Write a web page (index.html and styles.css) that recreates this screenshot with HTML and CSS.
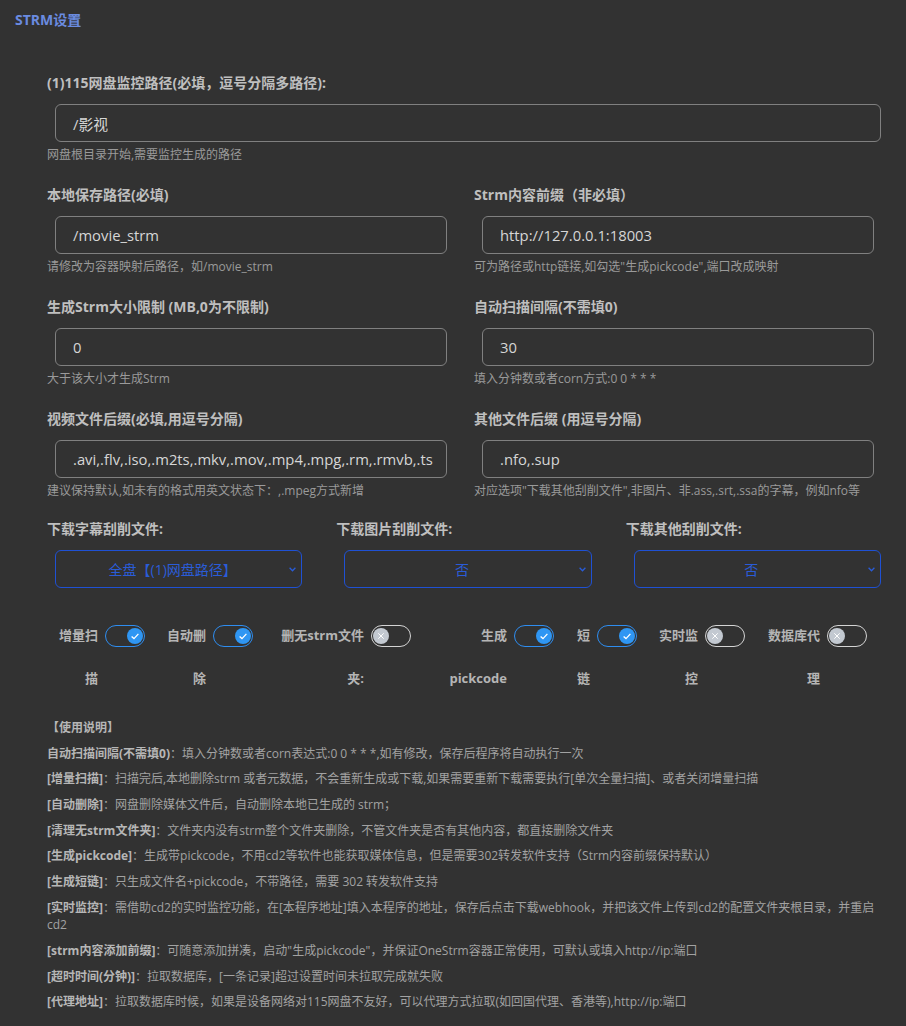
FILE: index.html
```html
<!DOCTYPE html>
<html lang="zh-CN">
<head>
<meta charset="utf-8">
<title>STRM设置</title>
<link rel="stylesheet" href="styles.css">
</head>
<body>
<div class="page">
  <div class="title">STRM设置</div>

  <div class="form">
    <div class="item full first">
      <div class="label">(1)115网盘监控路径(必填，逗号分隔多路径):</div>
      <div class="input">/影视</div>
      <div class="help">网盘根目录开始,需要监控生成的路径</div>
    </div>

    <div class="grid2">
      <div class="item">
        <div class="label">本地保存路径(必填)</div>
        <div class="input">/movie_strm</div>
        <div class="help">请修改为容器映射后路径，如/movie_strm</div>
      </div>
      <div class="item">
        <div class="label">Strm内容前缀（非必填）</div>
        <div class="input">http://127.0.0.1:18003</div>
        <div class="help">可为路径或http链接,如勾选"生成pickcode",端口改成映射</div>
      </div>
      <div class="item">
        <div class="label">生成Strm大小限制 (MB,0为不限制)</div>
        <div class="input">0</div>
        <div class="help">大于该大小才生成Strm</div>
      </div>
      <div class="item">
        <div class="label">自动扫描间隔(不需填0)</div>
        <div class="input">30</div>
        <div class="help">填入分钟数或者corn方式:0 0 * * *</div>
      </div>
      <div class="item">
        <div class="label">视频文件后缀(必填,用逗号分隔)</div>
        <div class="input">.avi,.flv,.iso,.m2ts,.mkv,.mov,.mp4,.mpg,.rm,.rmvb,.ts</div>
        <div class="help">建议保持默认,如未有的格式用英文状态下：,.mpeg方式新增</div>
      </div>
      <div class="item">
        <div class="label">其他文件后缀 (用逗号分隔)</div>
        <div class="input">.nfo,.sup</div>
        <div class="help">对应选项"下载其他刮削文件",非图片、非.ass,.srt,.ssa的字幕，例如nfo等</div>
      </div>
    </div>

    <div class="grid3">
      <div class="item">
        <div class="label">下载字幕刮削文件:</div>
        <div class="select"><span class="select-text">全盘【(1)网盘路径】</span><svg class="chev" width="7" height="5" viewBox="0 0 7 5"><path d="M0.6 0.8 L3.5 3.8 L6.4 0.8" fill="none" stroke="#2a5cd8" stroke-width="1.3"/></svg></div>
      </div>
      <div class="item">
        <div class="label">下载图片刮削文件:</div>
        <div class="select"><span class="select-text">否</span><svg class="chev" width="7" height="5" viewBox="0 0 7 5"><path d="M0.6 0.8 L3.5 3.8 L6.4 0.8" fill="none" stroke="#2a5cd8" stroke-width="1.3"/></svg></div>
      </div>
      <div class="item">
        <div class="label">下载其他刮削文件:</div>
        <div class="select"><span class="select-text">否</span><svg class="chev" width="7" height="5" viewBox="0 0 7 5"><path d="M0.6 0.8 L3.5 3.8 L6.4 0.8" fill="none" stroke="#2a5cd8" stroke-width="1.3"/></svg></div>
      </div>
    </div>

    <div class="toggles">
      <div class="tog">
        <div class="tlabel w51">增量扫<br>描</div>
        <div class="switch on"><span class="knob"><svg width="16" height="16" viewBox="0 0 16 16"><path d="M4.6 8.4 L7 10.6 L11.4 5.9" fill="none" stroke="#fff" stroke-width="1.3"/></svg></span></div>
      </div>
      <div class="tog">
        <div class="tlabel w51">自动删<br>除</div>
        <div class="switch on"><span class="knob"><svg width="16" height="16" viewBox="0 0 16 16"><path d="M4.6 8.4 L7 10.6 L11.4 5.9" fill="none" stroke="#fff" stroke-width="1.3"/></svg></span></div>
      </div>
      <div class="tog">
        <div class="tlabel w101">删无strm文件<br>夹:</div>
        <div class="switch off"><span class="knob"><svg width="16" height="16" viewBox="0 0 16 16"><path d="M5.3 5.3 L10.7 10.7 M10.7 5.3 L5.3 10.7" fill="none" stroke="#fff" stroke-width="1"/></svg></span></div>
      </div>
      <div class="tog">
        <div class="tlabel w86">生成<br>pickcode</div>
        <div class="switch on"><span class="knob"><svg width="16" height="16" viewBox="0 0 16 16"><path d="M4.6 8.4 L7 10.6 L11.4 5.9" fill="none" stroke="#fff" stroke-width="1.3"/></svg></span></div>
      </div>
      <div class="tog">
        <div class="tlabel w26">短<br>链</div>
        <div class="switch on"><span class="knob"><svg width="16" height="16" viewBox="0 0 16 16"><path d="M4.6 8.4 L7 10.6 L11.4 5.9" fill="none" stroke="#fff" stroke-width="1.3"/></svg></span></div>
      </div>
      <div class="tog">
        <div class="tlabel w51">实时监<br>控</div>
        <div class="switch off"><span class="knob"><svg width="16" height="16" viewBox="0 0 16 16"><path d="M5.3 5.3 L10.7 10.7 M10.7 5.3 L5.3 10.7" fill="none" stroke="#fff" stroke-width="1"/></svg></span></div>
      </div>
      <div class="tog">
        <div class="tlabel w65">数据库代<br>理</div>
        <div class="switch off"><span class="knob"><svg width="16" height="16" viewBox="0 0 16 16"><path d="M5.3 5.3 L10.7 10.7 M10.7 5.3 L5.3 10.7" fill="none" stroke="#fff" stroke-width="1"/></svg></span></div>
      </div>
    </div>

    <div class="usage">
      <p><b>【使用说明】</b></p>
      <p><b>自动扫描间隔(不需填0)</b>：填入分钟数或者corn表达式:0 0 * * *,如有修改，保存后程序将自动执行一次</p>
      <p><b>[增量扫描]</b>：扫描完后,本地删除strm 或者元数据，不会重新生成或下载,如果需要重新下载需要执行[单次全量扫描]、或者关闭增量扫描</p>
      <p><b>[自动删除]</b>：网盘删除媒体文件后，自动删除本地已生成的 strm；</p>
      <p><b>[清理无strm文件夹]</b>：文件夹内没有strm整个文件夹删除，不管文件夹是否有其他内容，都直接删除文件夹</p>
      <p><b>[生成pickcode]</b>：生成带pickcode，不用cd2等软件也能获取媒体信息，但是需要302转发软件支持（Strm内容前缀保持默认）</p>
      <p><b>[生成短链]</b>：只生成文件名+pickcode，不带路径，需要 302 转发软件支持</p>
      <p><b>[实时监控]</b>：需借助cd2的实时监控功能，在[本程序地址]填入本程序的地址，保存后点击下载webhook，并把该文件上传到cd2的配置文件夹根目录，并重启<br>cd2</p>
      <p><b>[strm内容添加前缀]</b>：可随意添加拼凑，启动"生成pickcode"，并保证OneStrm容器正常使用，可默认或填入http://ip:端口</p>
      <p><b>[超时时间(分钟)]</b>：拉取数据库，[一条记录]超过设置时间未拉取完成就失败</p>
      <p><b>[代理地址]</b>：拉取数据库时候，如果是设备网络对115网盘不友好，可以代理方式拉取(如回国代理、香港等),http://ip:端口</p>
    </div>
  </div>
</div>
</body>
</html>
```

FILE: styles.css
```css
* { box-sizing: border-box; }
html, body {
  margin: 0;
  padding: 0;
  background: #323232;
}
body {
  font-family: "Open Sans", "Noto Sans CJK SC", sans-serif;
  color: #bdbdbd;
}
.page {
  width: 906px;
  min-height: 1026px;
  padding: 10px 0 0 15px;
}
.title {
  font-size: 14px;
  line-height: 20px;
  font-weight: 700;
  color: #6a8be0;
}
.form {
  margin-top: 43px;
  margin-left: 32px;
  width: 842px;
}
.item .label {
  font-size: 14px;
  line-height: 20px;
  font-weight: 700;
  color: #bfbfbf;
  margin-bottom: 11px;
  white-space: nowrap;
}
.input {
  margin: 0 8px;
  height: 38px;
  border: 1px solid #808080;
  border-radius: 6px;
  padding: 0 17px;
  display: flex;
  align-items: center;
  font-size: 14.8px;
  color: #d6d6d6;
  white-space: nowrap;
  overflow: hidden;
}
.help {
  margin-top: 3px;
  font-size: 12px;
  line-height: 20px;
  color: #9a9a9a;
  white-space: nowrap;
}
.grid2 {
  margin-top: 20px;
  display: grid;
  grid-template-columns: 408px 408px;
  column-gap: 19px;
  row-gap: 20px;
}
.grid3 {
  margin-top: 18px;
  display: grid;
  grid-template-columns: repeat(3, 1fr);
  column-gap: 26px;
}
.select {
  margin: 0 8px;
  height: 38px;
  border: 1px solid #1f51d4;
  border-radius: 6px;
  padding: 0 5px 0 8px;
  display: flex;
  align-items: center;
  gap: 8px;
  color: #2a5cd8;
  font-size: 14px;
}
.select-text {
  flex: 1;
  text-align: center;
  white-space: nowrap;
}
.chev { flex: none; }
.toggles {
  margin-top: 26px;
  display: flex;
  align-items: flex-start;
  gap: 10px;
}
.tog {
  display: flex;
  align-items: flex-start;
}
.tlabel {
  font-size: 13px;
  font-weight: 700;
  line-height: 43px;
  color: #b5b5b5;
  text-align: right;
  white-space: nowrap;
  margin-right: 7px;
}
.w51 { width: 51px; }
.w101 { width: 101px; }
.w86 { width: 86px; }
.w26 { width: 26px; }
.w65 { width: 65px; }
.switch {
  width: 40px;
  height: 22px;
  margin-top: 10.5px;
  border-radius: 11px;
  border: 1.5px solid #2e8df0;
  display: flex;
  align-items: center;
}
.switch.on {
  justify-content: flex-end;
  padding-right: 1.5px;
}
.switch.off {
  border-color: #d4d4d4;
  padding-left: 0.5px;
}
.knob {
  width: 16px;
  height: 16px;
  border-radius: 50%;
  background: #2f96f3;
  display: block;
}
.knob svg { display: block; }
.switch.off .knob { background: #c3c9d1; }
.usage {
  margin-top: 19px;
  width: 835px;
  display: flex;
  flex-direction: column;
  gap: 8.2px;
}
.usage p {
  margin: 0;
  font-size: 12px;
  line-height: 17.5px;
  color: #a2a2a2;
}
.usage b {
  font-weight: 700;
  color: #b6b6b6;
}
```
